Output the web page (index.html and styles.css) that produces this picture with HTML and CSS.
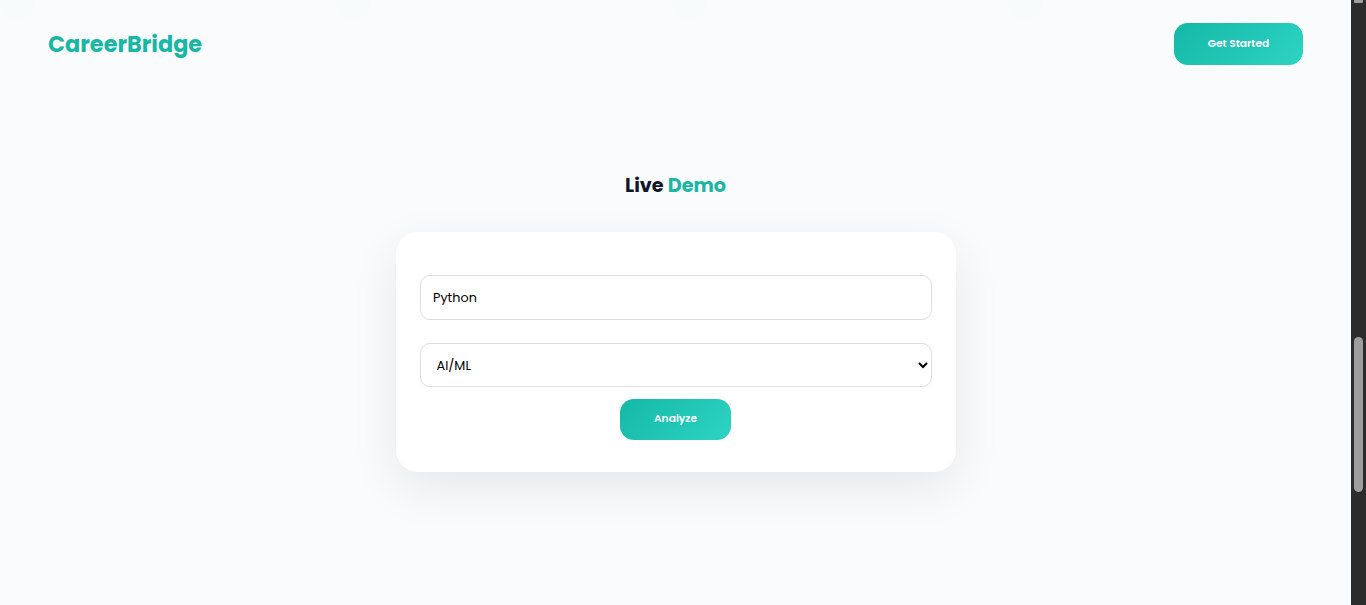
FILE: index.html
```
<!DOCTYPE html>
<html lang="en">
<head>
<meta charset="utf-8">
<title>CareerBridge</title>
<link rel="stylesheet" href="styles.css">
</head>
<body>
<div class="page">
  <div class="content">
    <div class="dots"><i class="dot"></i><i class="dot"></i><i class="dot"></i><i class="dot"></i></div>
    <header class="navbar">
      <div class="logo">CareerBridge</div>
      <button class="btn btn-start"><span>Get Started</span></button>
    </header>
    <main class="demo">
      <h2 class="title">Live <span class="word-demo">Demo</span></h2>
      <form class="card">
        <input class="field" type="text" value="Python">
        <select class="field select"><option>AI/ML</option></select>
        <button class="btn btn-analyze" type="button"><span>Analyze</span></button>
      </form>
    </main>
  </div>
  <div class="scrollbar">
    <svg width="15" height="605" viewBox="0 0 15 605"><path d="M3 0H12V2Q12 3 11 3H4Q3 3 3 2Z" fill="#9f9f9f"/><rect x="3" y="337" width="9" height="155" rx="4.500" fill="#9f9f9f"/></svg>
  </div>
</div>
</body>
</html>
```
FILE: styles.css
```
* { box-sizing: border-box; }
body { margin: 0; overflow: hidden; font-family: Poppins, Inter, sans-serif; background: #fafbfd; }
.page { display: flex; height: 605px; }
.content { position: relative; flex: 1; min-width: 0; }
.scrollbar { width: 15px; background: #2c2c2c; }
.scrollbar svg { display: block; }
.dots { position: absolute; top: -14px; left: 0; display: flex; gap: 302px; }
.dot { width: 34px; height: 34px; border-radius: 50%; background: #f6fbfb; }
.navbar { position: relative; height: 88px; padding: 0 48px; display: flex; align-items: center; justify-content: space-between; }
.logo { color: #18b7a5; font-size: 22.400px; line-height: 36px; font-weight: 700; }
.btn { border: 0; padding: 0 0 1px; border-radius: 14px; color: #fff; font-family: inherit; font-weight: 600; background: linear-gradient(135deg, #14b8a6, #2dd4c4); }
.btn-start { width: 129px; height: 42px; font-size: 10.667px; }
.demo { display: flex; flex-direction: column; align-items: center; padding-top: 83px; }
.title { margin: 0; font-size: 19.200px; line-height: 30px; font-weight: 700; color: #0f172a; }
.word-demo { color: #18b7a5; }
.card { margin-top: 31px; width: 560px; height: 240px; padding: 43px 24px 0; display: flex; flex-direction: column; align-items: center; border-radius: 22px; background: #fff; box-shadow: 0 16px 48px rgba(0,0,0,.08); }
.field { display: block; width: 512px; height: 45px; padding: 0 12.500px; border: 1px solid #ddd; border-radius: 10px; background: #fff; color: #000; font-family: inherit; font-size: 12.800px; outline: 0; }
.select { height: 44px; margin-top: 23px; padding: 0 12px; }
.btn-analyze { width: 111px; height: 41px; margin-top: 12px; padding-bottom: 2px; font-size: 10.667px; }
```
